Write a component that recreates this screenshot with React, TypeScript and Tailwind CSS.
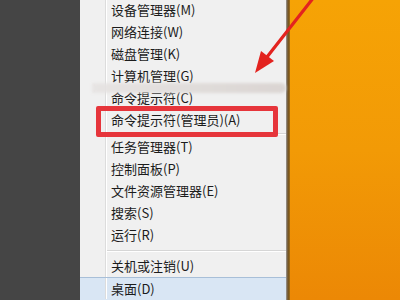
import React from 'react';

type Item = { label: string; active?: boolean };

const groups: Item[][] = [
  [
    { label: '设备管理器(M)' },
    { label: '网络连接(W)' },
    { label: '磁盘管理(K)' },
    { label: '计算机管理(G)' },
    { label: '命令提示符(C)' },
    { label: '命令提示符(管理员)(A)' },
  ],
  [
    { label: '任务管理器(T)' },
    { label: '控制面板(P)' },
    { label: '文件资源管理器(E)' },
    { label: '搜索(S)' },
    { label: '运行(R)' },
  ],
  [{ label: '关机或注销(U)' }, { label: '桌面(D)', active: true }],
];

function Gutter() {
  return (
    <>
      <div className="w-[25px] shrink-0" />
      <div className="w-[2px] shrink-0 border-l border-[#dcdcdc] border-r border-r-white" />
    </>
  );
}

function MenuRow({ item }: { item: Item }) {
  return (
    <div
      className={`flex h-[22px] items-stretch ${
        item.active ? 'bg-[#d9e6f4] border-t border-[#a8bfd8]' : ''
      }`}
    >
      <Gutter />
      <span className="flex items-center pl-[4px] text-[13px] text-[#1c1c1c] whitespace-nowrap">
        {item.label}
      </span>
    </div>
  );
}

function Separator({ height }: { height: string }) {
  return (
    <div className={`flex ${height} items-stretch`}>
      <Gutter />
      <div className="flex flex-1 flex-col justify-center">
        <div className="h-[2px] border-t border-[#d6d6d6] border-b border-b-white" />
      </div>
    </div>
  );
}

export default function App() {
  return (
    <div className="relative flex h-[300px] w-[400px] overflow-hidden bg-[#454545] font-['Noto_Sans_CJK_SC',sans-serif]">
      {/* dark desktop at left */}
      <div className="w-[80px] shrink-0 bg-[#454545]" />

      {/* Win+X menu */}
      <div className="flex w-[206px] shrink-0 flex-col bg-[#f0f0f0] -mt-[1px]">
        {groups[0].map((it) => (
          <MenuRow key={it.label} item={it} />
        ))}
        <Separator height="h-[5px]" />
        {groups[1].map((it) => (
          <MenuRow key={it.label} item={it} />
        ))}
        <Separator height="h-[9px]" />
        {groups[2].map((it) => (
          <MenuRow key={it.label} item={it} />
        ))}
        <div className="flex-1 bg-[#d9e6f4]" />
      </div>

      {/* menu edge */}
      <div className="w-[4px] shrink-0 bg-gradient-to-r from-[#9a9a9a] via-[#6e4f1e] to-[#a0701c]" />

      {/* orange start screen */}
      <div className="flex-1 bg-gradient-to-b from-[#f6a305] via-[#f29a06] to-[#ec8805]" />

      {/* smudge over the command prompt row */}
      <div className="absolute left-[92px] top-[83px] h-[10px] w-[194px] rounded-r-full bg-gradient-to-r from-[#e6e3e2] to-[#d8d2cf] opacity-90 blur-[1.5px]" />

      {/* red highlight box */}
      <div className="absolute left-[96px] top-[106px] h-[31px] w-[182px] rounded-[2px] border-[5px] border-[#e6353b]" />

      {/* red arrow */}
      <svg className="absolute inset-0" width="400" height="300" viewBox="0 0 400 300">
        <line x1="314" y1="-3" x2="267" y2="57" stroke="#e3231f" strokeWidth="3.2" strokeLinecap="round" />
        <polygon points="255,73 261,51 274,61" fill="#e3231f" />
      </svg>
    </div>
  );
}
